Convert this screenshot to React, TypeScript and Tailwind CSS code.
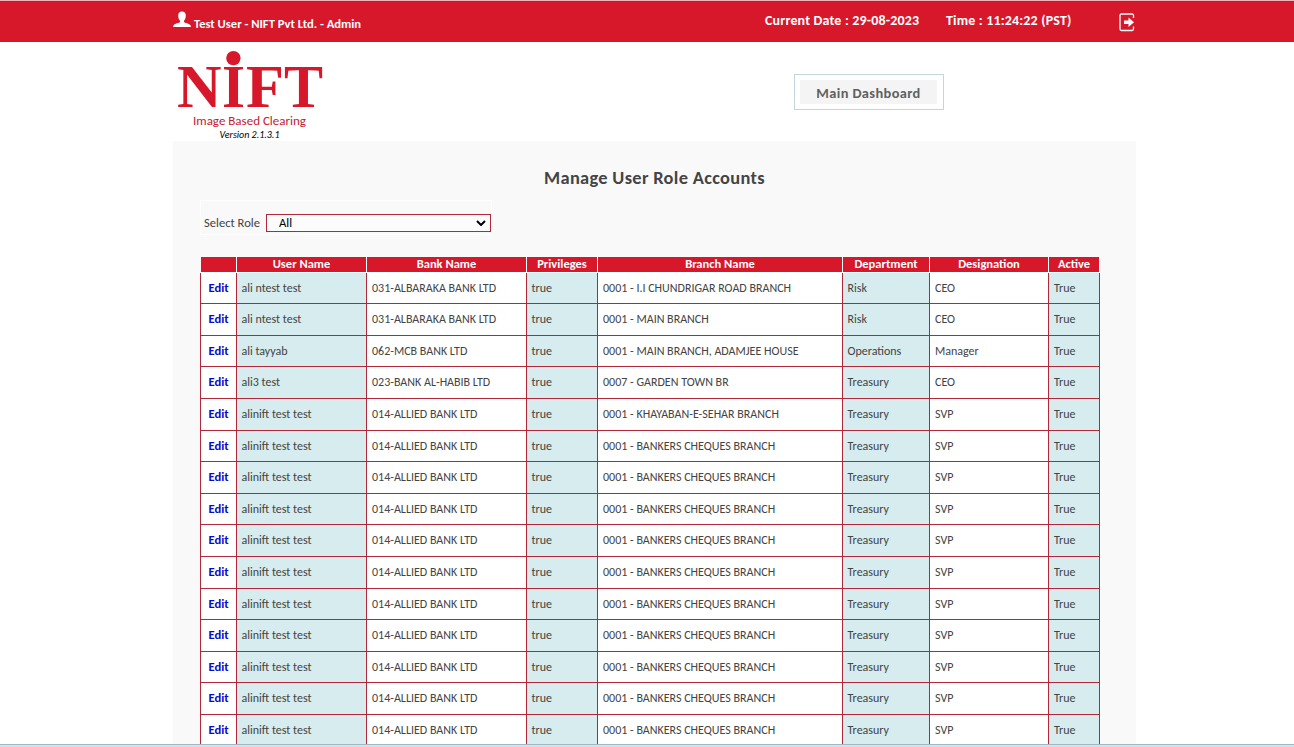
type Row = { h: string; user: string; bank: string; branch: string; dept: string; desig: string };

const H31 = "h-[31px]";
const H32 = "h-[32px]";
const allied = (h: string, branch = "0001 - BANKERS CHEQUES BRANCH"): Row => ({
  h,
  user: "alinift test test",
  bank: "014-ALLIED BANK LTD",
  branch,
  dept: "Treasury",
  desig: "SVP",
});

const rows: Row[] = [
  { h: H31, user: "ali ntest test", bank: "031-ALBARAKA BANK LTD", branch: "0001 - I.I CHUNDRIGAR ROAD BRANCH", dept: "Risk", desig: "CEO" },
  { h: H32, user: "ali ntest test", bank: "031-ALBARAKA BANK LTD", branch: "0001 - MAIN BRANCH", dept: "Risk", desig: "CEO" },
  { h: H31, user: "ali tayyab", bank: "062-MCB BANK LTD", branch: "0001 - MAIN BRANCH, ADAMJEE HOUSE", dept: "Operations", desig: "Manager" },
  { h: H32, user: "ali3 test", bank: "023-BANK AL-HABIB LTD", branch: "0007 - GARDEN TOWN BR", dept: "Treasury", desig: "CEO" },
  allied(H32, "0001 - KHAYABAN-E-SEHAR BRANCH"),
  allied(H31),
  allied(H32),
  allied(H31),
  allied(H32),
  allied(H32),
  allied(H31),
  allied(H32),
  allied(H31),
  allied(H32),
  allied(H32),
];

const cols = "grid grid-cols-[36px_130px_160px_71px_245px_87px_119px_51px]";
const headers = ["", "User Name", "Bank Name", "Privileges", "Branch Name", "Department", "Designation", "Active"];
const cell = "flex items-start border-r border-b border-[#b0283a] pt-[7px] whitespace-pre leading-4";

function Header() {
  return (
    <header className="h-[42px] shrink-0 border-t border-[#f3b5bb] bg-[#d7182a] font-bold text-white">
      <div className="h-full border-t border-[#c01a2a]">
        <div className="ml-[173px] flex h-full w-[963px]">
          <svg className="mt-[9px] h-[17px] w-[18px]" viewBox="0 0 18 17" fill="#fff">
            <path d="M9 0.5C6.6 0.5 5.2 2 5.2 4.4C5.2 6.6 5.8 8.6 7 9.7V11C6.6 12 1.4 12.6 .5 14.2C.2 14.8 .1 15.4 .1 16H17.9C17.9 15.4 17.8 14.8 17.5 14.2C16.6 12.6 11.4 12 11 11V9.7C12.2 8.6 12.8 6.6 12.8 4.4C12.8 2 11.4 .5 9 .5Z" />
          </svg>
          <span className="mt-[14px] ml-[3px] w-[571px] text-[12.6px] leading-4">Test User - NIFT Pvt Ltd. - Admin</span>
          <span className="mt-[9px] w-[181px] text-[14px] leading-5 tracking-[0.17px]">Current Date : 29-08-2023</span>
          <span className="mt-[9px] w-[173px] text-[14px] leading-5 tracking-[0.17px]">Time : 11:24:22 (PST)</span>
          <svg className="mt-[11px] h-[19px] w-[16px]" viewBox="0 0 16 19" fill="none">
            <path d="M14.5 5V2.5Q14.5 1 13 1H2.5Q1 1 1 2.5V16Q1 17.5 2.5 17.5H13Q14.5 17.5 14.5 16V13.5" stroke="#fff" strokeWidth="1.3" />
            <path d="M5 7.5H9.5V4.6L15 9.3L9.5 14V11H5Z" fill="#fff" />
          </svg>
        </div>
      </div>
    </header>
  );
}

function Logo() {
  return (
    <div className="flex w-[153px] flex-col items-center">
      <svg className="mt-[8px] h-[60px] w-[153px] overflow-visible" viewBox="173 50 153 60" fill="#d7182a" fontFamily="Liberation Serif" fontWeight="bold" fontSize="62">
        <text x="177" y="107.2" textLength="44.5" lengthAdjust="spacingAndGlyphs">N</text>
        <text x="222" y="107.2" textLength="23" lengthAdjust="spacingAndGlyphs">I</text>
        <text x="246" y="107.2" textLength="38" lengthAdjust="spacingAndGlyphs">F</text>
        <text x="284" y="107.2" textLength="39" lengthAdjust="spacingAndGlyphs">T</text>
        <circle cx="233.4" cy="58.1" r="7.2" />
      </svg>
      <span className="mt-[4px] text-[13px] leading-[14px] text-[#c8202f]">Image Based Clearing</span>
      <span className="text-[10px] leading-[13px] text-black italic">Version 2.1.3.1</span>
    </div>
  );
}

export default function App() {
  return (
    <div className="flex h-[747px] flex-col overflow-hidden bg-white font-['Carlito','Lato',sans-serif] text-[#444]">
      <Header />
      <div className="ml-[173px] flex h-[99px] w-[963px] shrink-0">
        <Logo />
        <button className="mt-8 ml-[468px] h-9 w-[150px] border border-[#c5d5dc] p-[5px]">
          <span className="flex h-full w-[137px] items-center justify-center bg-[#f4f4f4] pt-[3px] text-[14.4px] font-bold tracking-[0.38px] text-[#606060]">Main Dashboard</span>
        </button>
      </div>
      <main className="ml-[173px] min-h-0 w-[963px] flex-1 overflow-hidden bg-[#f9f9f9] pl-[27px]">
        <h1 className="mt-[25px] w-[909px] text-center text-[18.4px] leading-6 font-bold tracking-[0.32px]">Manage User Role Accounts</h1>
        <div className="mt-[10px] flex h-[35px] w-[292px] items-end border border-white pb-[2px] pl-[3px]">
          <label className="w-[62px] text-[12.6px] leading-[18px]">Select Role</label>
          <div className="flex h-[18px] w-[225px] items-center justify-between border border-[#b0283a] bg-[#fcfcfc] pr-1 pl-[12px] text-[12.7px] text-black">
            <span>All</span>
            <svg className="h-[6px] w-[10px]" viewBox="0 0 10 6" fill="none" stroke="#000" strokeWidth="2"><path d="M1 1L5 5L9 1" /></svg>
          </div>
        </div>
        <div className="mt-[22px] w-[900px]">
          <div className={`${cols} ml-px h-4 w-[899px] border-b border-white bg-[#d7182a] text-[12.5px] leading-[14px] font-bold text-white`}>
            {headers.map((t, i) => (
              <div key={i} className="flex h-[15px] items-start justify-center border-r border-white last:border-[#f9f9f9]">{t}</div>
            ))}
          </div>
          <div className="border-l border-[#b0283a] text-[12px]">
            {rows.map((r, i) => (
              <div key={i} className={`${cols} ${r.h}`}>
                <a className={`${cell} bg-white pl-[7.5px] text-[12.6px] font-bold text-[#0808c8]`}>Edit</a>
                <div className={`${cell} bg-[#d6ecee] pl-[4.5px]`}>{r.user}</div>
                <div className={`${cell} bg-white pl-[5px]`}>{r.bank}</div>
                <div className={`${cell} bg-[#d6ecee] pl-[4.5px]`}>true</div>
                <div className={`${cell} bg-white pl-[5px]`}>{r.branch}</div>
                <div className={`${cell} bg-[#d6ecee] pl-[4.5px]`}>{r.dept}</div>
                <div className={`${cell} bg-white pl-[5px]`}>{r.desig}</div>
                <div className={`${cell} bg-[#d6ecee] pl-[5px]`}>True</div>
              </div>
            ))}
          </div>
        </div>
      </main>
      <footer className="h-[3px] shrink-0 border-t border-[#9fb8c3] bg-[#d0e3ea]" />
    </div>
  );
}
